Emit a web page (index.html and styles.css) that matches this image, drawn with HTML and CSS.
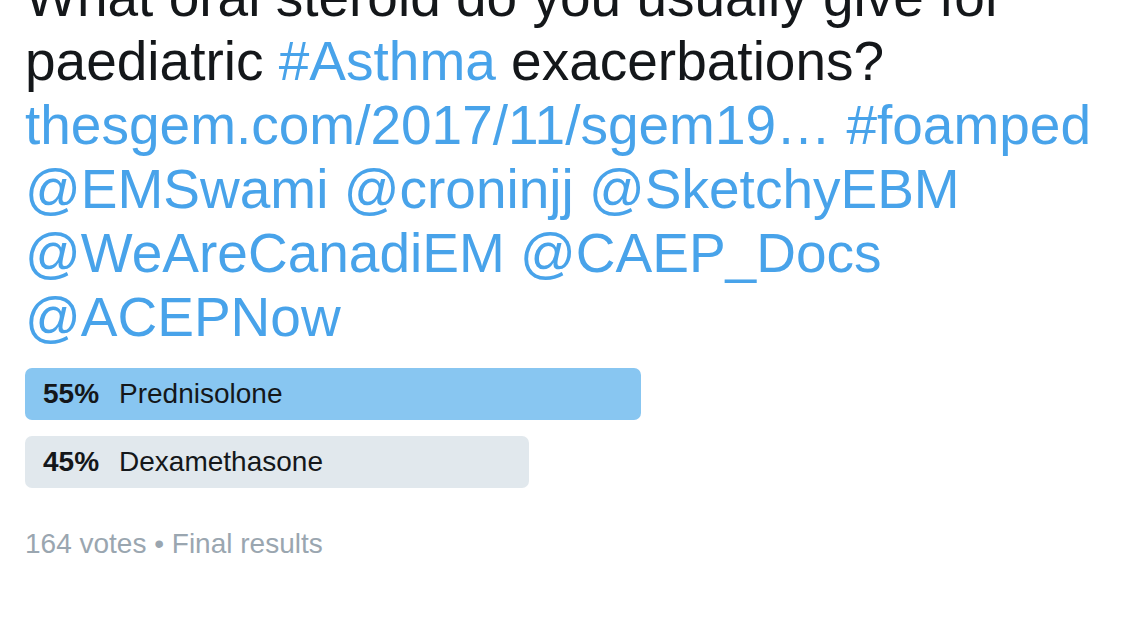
FILE: index.html
```html
<!DOCTYPE html>
<html lang="en">

<head>
	<meta charset="UTF-8">
	<title>Poll: oral steroid for paediatric asthma</title>
	<meta name="viewport" content="width=device-width">
	<link rel="stylesheet" href="styles.css">
</head>

<body>
	<main class="tweet">
		<p class="tweetText">What oral steroid do you usually give for paediatric <a href="#">#Asthma</a> exacerbations?
			<a href="#">thesgem.com/2017/11/sgem19…</a> <a href="#">#foamped</a>
			<a href="#">@EMSwami</a> <a href="#">@croninjj</a> <a href="#">@SketchyEBM</a>
			<a href="#">@WeAreCanadiEM</a> <a href="#">@CAEP_Docs</a>
			<a href="#">@ACEPNow</a>
		</p>

		<section class="poll">
			<div class="choice winner" style="width: 55%">
				<span class="pct">55%</span>
				<span class="label">Prednisolone</span>
			</div>
			<div class="choice" style="width: 45%">
				<span class="pct">45%</span>
				<span class="label">Dexamethasone</span>
			</div>
		</section>

		<p class="pollMeta">164 votes • Final results</p>
	</main>
</body>

</html>
```

FILE: styles.css
```css
html,
body {
	margin: 0;
	padding: 0;
	background: #fff;
	overflow: hidden;
}

body {
	font-family: "Liberation Sans", Arial, sans-serif;
	color: #14171a;
}

.tweet {
	padding-left: 25px;
}

.tweetText {
	margin: -35px 0 0;
	font-size: 55px;
	line-height: 64px;
}

.tweetText a {
	color: #48a3ea;
	text-decoration: none;
}

.poll {
	width: 1120px;
	margin-top: 19px;
	display: flex;
	flex-direction: column;
	gap: 16px;
}

.choice {
	height: 52px;
	display: flex;
	align-items: center;
	gap: 20px;
	padding-left: 18px;
	box-sizing: border-box;
	background-color: #e1e8ed;
	border-radius: 7px;
	font-size: 28px;
	white-space: nowrap;
}

.choice.winner {
	background-color: #88c6f1;
}

.pct {
	font-weight: bold;
}

.pollMeta {
	margin: 40px 0 0;
	font-size: 28px;
	line-height: 32px;
	color: #9aa6b0;
}
```
